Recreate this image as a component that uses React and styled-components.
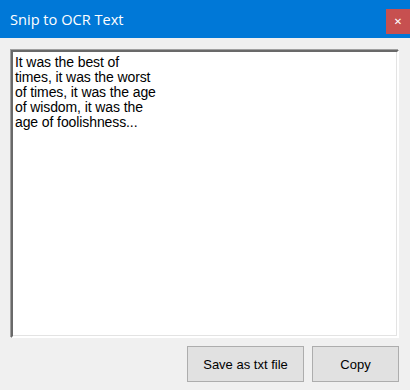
import React from "react";
import styled, { createGlobalStyle } from "styled-components";

const Global = createGlobalStyle`
  html, body { margin: 0; padding: 0; background: #f0f0f0; }
  body { width: 410px; height: 390px; overflow: hidden; }
`;

const Window = styled.div`
  width: 410px;
  height: 390px;
  display: flex;
  flex-direction: column;
  background: #f0f0f0;
`;

const TitleBar = styled.div`
  height: 38px;
  background: #0078d7;
  display: flex;
  align-items: center;
  justify-content: space-between;
  flex-shrink: 0;
`;

const Title = styled.span`
  color: #ffffff;
  font-family: "Open Sans", "Noto Sans", sans-serif;
  font-size: 14.6px;
  padding-left: 10px;
  margin-top: -1px;
`;

const CloseButton = styled.div`
  width: 24px;
  height: 25px;
  margin-top: 4px;
  background: #c75050;
  color: #ffffff;
  display: flex;
  align-items: center;
  justify-content: center;
  font-family: "DejaVu Sans", sans-serif;
  font-weight: bold;
  font-size: 10px;
`;

const Content = styled.div`
  flex: 1;
  display: flex;
  flex-direction: column;
  padding: 12px 11px 8px 11px;
  gap: 8px;
`;

const TextBox = styled.textarea`
  flex: 1;
  margin: 0;
  resize: none;
  outline: none;
  background: #ffffff;
  border-style: solid;
  border-width: 2px;
  border-color: #696969 #ffffff #ffffff #696969;
  box-shadow: inset -1px -1px 0 #e3e3e3, -1px -1px 0 #a0a0a0;
  padding: 3px 2px;
  font-family: "Liberation Sans", Arial, sans-serif;
  font-size: 14px;
  line-height: 15px;
  letter-spacing: -0.1px;
  color: #000000;
  overflow: hidden;
`;

const ButtonRow = styled.div`
  display: flex;
  justify-content: flex-end;
  gap: 8px;
  height: 36px;
`;

const Button = styled.button`
  width: ${(p) => p.$w}px;
  height: 36px;
  margin: 0;
  padding: 0;
  background: #e1e1e1;
  border: 1px solid #adadad;
  font-family: "Liberation Sans", Arial, sans-serif;
  font-size: 13px;
  color: #000000;
`;

const text =
  "It was the best of\ntimes, it was the worst\nof times, it was the age\nof wisdom, it was the\nage of foolishness...";

export default function App() {
  return (
    <>
      <Global />
      <Window>
        <TitleBar>
          <Title>Snip to OCR Text</Title>
          <CloseButton>✕</CloseButton>
        </TitleBar>
        <Content>
          <TextBox readOnly value={text} spellCheck={false} />
          <ButtonRow>
            <Button $w={117}>Save as txt file</Button>
            <Button $w={87}>Copy</Button>
          </ButtonRow>
        </Content>
      </Window>
    </>
  );
}
